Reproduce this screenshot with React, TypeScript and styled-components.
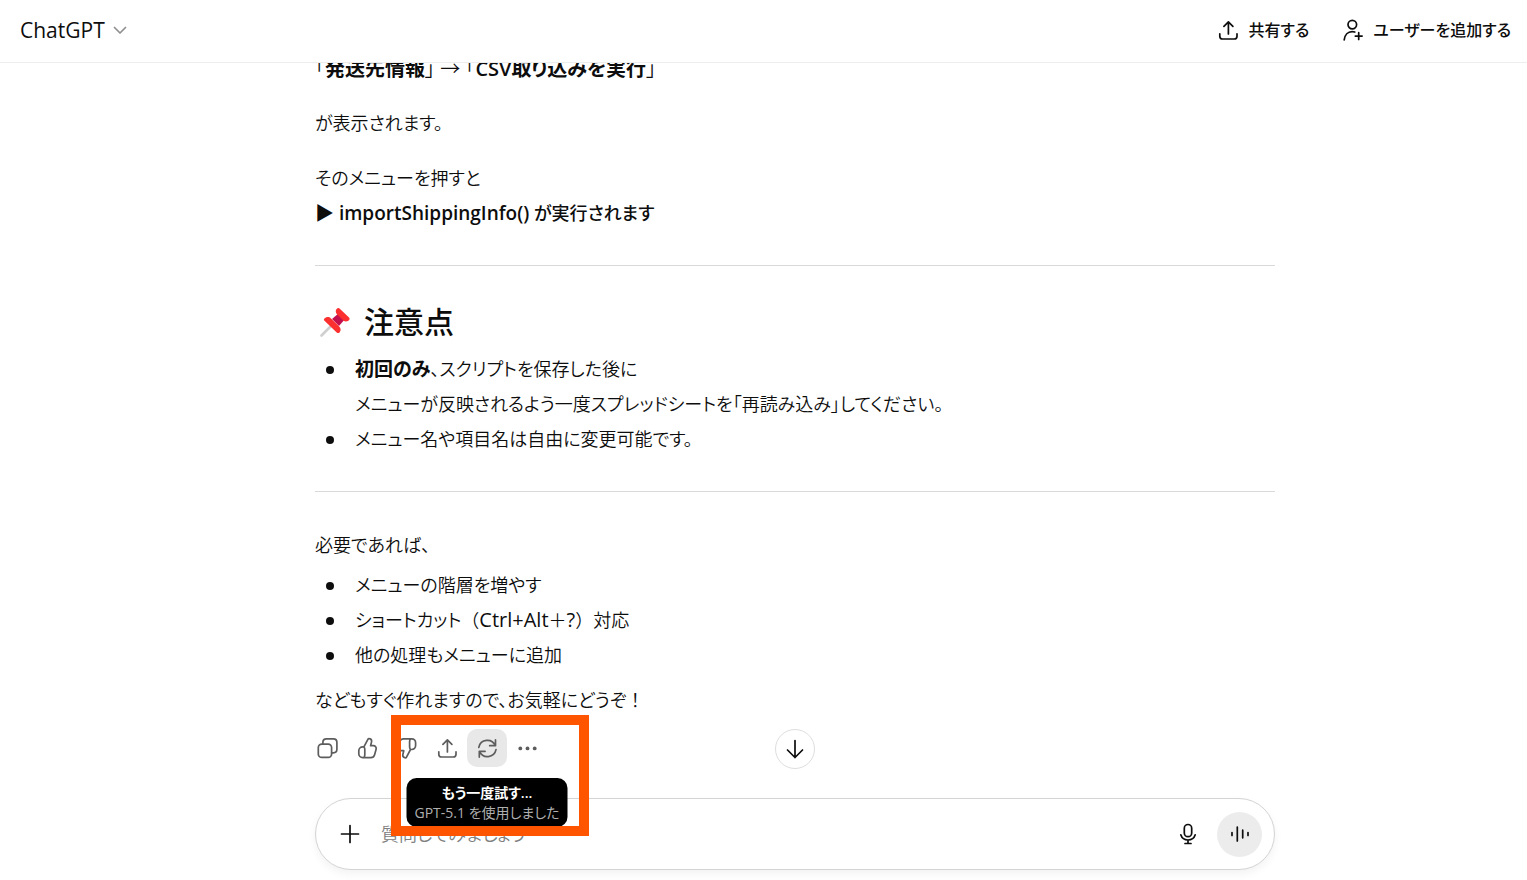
import React from "react";
import styled, { createGlobalStyle, css } from "styled-components";

const GlobalStyle = createGlobalStyle`
  * { box-sizing: border-box; }
  body {
    margin: 0;
    background: #fff;
    color: #0d0d0d;
    font-family: "Open Sans", "Noto Sans CJK JP", sans-serif;
    font-feature-settings: "palt";
  }
  button, input { font: inherit; font-feature-settings: inherit; color: inherit; }
  button { border: 0; padding: 0; background: none; cursor: pointer; }
`;

const Page = styled.div`
  display: flex;
  flex-direction: column;
  height: 100vh;
  overflow: hidden;
`;

const Header = styled.header`
  display: flex;
  flex: none;
  align-items: center;
  justify-content: space-between;
  height: 63px;
  padding: 0 16px 3px 20px;
  border-bottom: 1px solid #ededed;
`;

const ModelButton = styled.button`
  display: flex;
  align-items: center;
  gap: 7px;
  font-size: 21px;
  line-height: 32px;
`;

const HeaderActions = styled.div`
  display: flex;
  align-items: center;
  gap: 32px;
`;

const HeaderButton = styled.button`
  display: flex;
  align-items: center;
  gap: 8px;
  font-size: 16px;
  font-weight: 500;
  line-height: 24px;
`;

const Column = styled.div`
  width: 100%;
  max-width: 960px;
  margin: 0 auto;
`;

const Main = styled.main`
  display: flex;
  flex: 1;
  flex-direction: column;
  min-height: 0;
  padding-left: 63px;
`;

const Thread = styled.div`
  display: flex;
  flex: 1;
  flex-direction: column;
  justify-content: flex-end;
  min-height: 0;
  overflow: hidden;
`;

const Message = styled.article`
  font-size: 18px;
  font-weight: 350;
  line-height: 35px;
`;

const Paragraph = styled.p<{ $space?: number; $large?: boolean }>`
  margin: 0 0 ${(p) => p.$space ?? 0}px;
  ${(p) => p.$large && css`font-size: 20px;`}
`;

const Strong = styled.strong<{ $medium?: boolean; $lead?: boolean }>`
  font-weight: ${(p) => (p.$medium ? 500 : 600)};
  ${(p) => p.$lead && css`font-size: 19px; line-height: 1;`}
`;

const Latin = styled.span<{ $strong?: boolean }>`
  font-size: ${(p) => (p.$strong ? 19 : 20)}px;
  font-weight: ${(p) => (p.$strong ? 600 : 400)};
  line-height: 1;
`;

const FullWidth = styled.span`
  font-feature-settings: normal;
`;

const Rule = styled.hr`
  height: 1px;
  margin: 34px 0 36px;
  border: 0;
  background: #d9d9d9;
`;

const Heading = styled.h2`
  display: flex;
  align-items: center;
  gap: 13px;
  margin: 0 0 10px;
  padding-left: 4px;
  font-size: 30px;
  font-weight: 500;
  line-height: 40px;
`;

const List = styled.ul<{ $space?: number }>`
  margin: 0 0 ${(p) => p.$space ?? 0}px;
  padding: 0;
  list-style: none;
`;

const Item = styled.li`
  display: flex;
  padding-left: 11px;
  gap: 21px;

  &::before {
    content: "";
    flex: none;
    width: 8px;
    height: 8px;
    margin-top: 14px;
    border-radius: 50%;
    background: #0d0d0d;
  }
`;

const Toolbar = styled.div`
  position: relative;
  display: flex;
  margin: 0 -8px;
`;

const ToolButton = styled.button<{ $active?: boolean }>`
  position: relative;
  display: grid;
  place-items: center;
  width: 40px;
  height: 38px;
  border-radius: 10px;
  color: #5d5d5d;
  ${(p) => p.$active && css`background: #e8e8e8;`}
`;

const Tooltip = styled.span`
  position: absolute;
  top: 49px;
  left: 50%;
  z-index: 2;
  display: flex;
  flex-direction: column;
  align-items: center;
  padding: 5px 8px 4px;
  border-radius: 10px;
  background: #000;
  color: #fff;
  font-size: 14px;
  font-weight: 600;
  line-height: 20px;
  white-space: nowrap;
  transform: translateX(-50%);
`;

const TooltipNote = styled.span`
  color: #afafaf;
  font-weight: 400;
`;

const Highlight = styled.div`
  position: absolute;
  top: -14px;
  left: 84px;
  z-index: 3;
  width: 198px;
  height: 121px;
  border: 10px solid #ff5500;
  pointer-events: none;
`;

const ToolbarRow = styled(Column)`
  position: relative;
  z-index: 1;
  flex: none;
  padding: 11px 0 31px;
`;

const Composer = styled.form`
  position: relative;
  display: flex;
  flex: none;
  align-items: center;
  height: 72px;
  padding: 0 12px 0 18px;
  border: 1px solid #d4d4d4;
  border-radius: 36px;
  background: #fff;
  box-shadow: 0 4px 8px rgba(0, 0, 0, 0.05);
`;

const ComposerArea = styled(Column)`
  flex: none;
  padding-bottom: 10px;
`;

const Prompt = styled.input`
  flex: 1;
  min-width: 0;
  margin-left: 15px;
  padding: 0;
  border: 0;
  outline: 0;
  background: none;
  font-size: 18px;
  font-weight: 350;
  line-height: 32px;

  &::placeholder { color: #808080; opacity: 1; }
`;

const IconButton = styled.button`
  display: grid;
  place-items: center;
  width: 32px;
  height: 40px;
`;

const VoiceButton = styled.button`
  display: grid;
  place-items: center;
  width: 45px;
  height: 45px;
  margin-left: 13px;
  border-radius: 50%;
  background: #ececec;
`;

const ScrollButton = styled.button`
  position: absolute;
  top: -70px;
  left: 50%;
  display: grid;
  place-items: center;
  width: 40px;
  height: 40px;
  border: 1px solid #dedede;
  border-radius: 50%;
  background: #fff;
  transform: translateX(-50%);
`;

const Svg = styled.svg`
  display: block;
  flex: none;
  fill: none;
  stroke: currentColor;
  stroke-width: 1.7;
  stroke-linecap: round;
  stroke-linejoin: round;
`;

const Icon = ({ children, size = 24 }: { children: React.ReactNode; size?: number }) => (
  <Svg width={size} height={size} viewBox={`0 0 ${size} ${size}`} aria-hidden="true">
    {children}
  </Svg>
);

const ShareIcon = () => (
  <Icon>
    <path d="M12.4 16V4M7.9 8.3 12.4 3.8l4.5 4.5M3.8 15.8v2.4c0 1.6 1.2 2.8 2.8 2.8h11.6c1.6 0 2.8-1.2 2.8-2.8v-2.4" />
  </Icon>
);

const AddUserIcon = () => (
  <Icon>
    <circle cx="11.3" cy="6.6" r="4.3" />
    <path d="M3.2 21.8c.6-4.9 3.7-8.2 7.9-8.2 1 0 1.9.1 2.7.4M17.7 14.7v6.8M14.3 18.1h6.8" />
  </Icon>
);

const CopyIcon = () => (
  <Icon>
    <rect x="3.3" y="8.1" width="13.3" height="13.3" rx="3.4" />
    <path d="M7.9 8V6.3c0-2 1.5-3.5 3.5-3.5h7c2 0 3.5 1.5 3.5 3.5v7c0 2-1.5 3.5-3.5 3.5h-1.7" />
  </Icon>
);

const thumb =
  "M8.9 10.9 12.9 3.3c.3-.6.9-.9 1.5-.7 1.6.4 2.5 1.9 2.1 3.5l-.9 3.6h2.700c2 0 3.300 1.700 2.800 3.500l-1.500 5.500c-.5 1.800-1.900 2.900-3.700 2.900H7.700c-2.200 0-3.900-1.700-3.900-3.900v-2.900c0-2.200 1.700-3.900 3.900-3.900h1.200M8.900 10.900c.6.7.9 1.500.9 2.400v5.500c0 1-.3 1.900-.9 2.700";

const ThumbUpIcon = () => (
  <Icon><path d={thumb} /></Icon>
);

const ThumbDownIcon = () => (
  <Icon><path d={thumb} transform="rotate(180 12.2 12.2)" /></Icon>
);

const RetryIcon = () => (
  <Icon>
    <path d="M3.8 11.3a8.7 8.7 0 0 1 16.5-1.7M20.5 3.9v5.8h-5.8M21 13.7a8.7 8.7 0 0 1-16.5 1.7M4.3 21.1v-5.8h5.8" />
  </Icon>
);

const MoreIcon = () => (
  <Icon>
    <g fill="currentColor" stroke="none">
      <circle cx="5.3" cy="12.4" r="1.9" />
      <circle cx="12.5" cy="12.4" r="1.9" />
      <circle cx="19.7" cy="12.4" r="1.9" />
    </g>
  </Icon>
);

const PinIcon = () => (
  <Svg width="32" height="32" viewBox="0 0 32 32" aria-hidden="true">
    <path d="M2.5 29.5 12 20" stroke="#cfcfcf" strokeWidth="2.6" />
    <path d="m13 13 7-6 6 6-6 7Z" fill="#c3104c" stroke="none" />
    <path d="M17.4 3.3c1.2-1.5 2.3-1.6 3.4-.6l9.2 8.8c1 1 .7 2.4-.6 3.2-1.8 1-3.4.9-4.7.1l-7-6.9c-1.1-1.6-1.3-3.2-.3-4.6Z" fill="#fb302f" stroke="none" />
    <path d="M5.8 12.2c2-1.7 4.5-1.3 6.2.3l8 7.8c1.9 1.9 2.2 4.1.7 5.9-.9 1.1-2 1.2-3 .2L5.5 14.8c-.9-.9-.8-1.8.3-2.6Z" fill="#fb302f" stroke="none" />
  </Svg>
);

export default function App() {
  return (
    <>
      <GlobalStyle />
      <Page>
        <Header>
          <ModelButton type="button">
            ChatGPT
            <Svg width="16" height="16" viewBox="0 0 16 16" color="#8f8f8f" aria-hidden="true">
              <path d="m2.5 5.5 5.5 5.5 5.5-5.5" />
            </Svg>
          </ModelButton>
          <HeaderActions>
            <HeaderButton type="button"><ShareIcon />共有する</HeaderButton>
            <HeaderButton type="button"><AddUserIcon />ユーザーを追加する</HeaderButton>
          </HeaderActions>
        </Header>
        <Main>
          <Thread>
            <Column>
              <Message>
                <Paragraph $space={20} $large>
                  「<Strong>発送先情報</Strong>」 → 「<Strong>CSV取り込みを実行</Strong>」
                </Paragraph>
                <Paragraph $space={20}>が表示されます。</Paragraph>
                <Paragraph>
                  そのメニューを押すと<br />
                  <Strong $medium>
                    <Latin $strong>▶ importShippingInfo()</Latin> が実行されます
                  </Strong>
                </Paragraph>
                <Rule />
                <Heading><PinIcon />注意点</Heading>
                <List>
                  <Item>
                    <span>
                      <Strong $lead>初回のみ</Strong>、スクリプトを保存した後に<br />
                      メニューが反映されるよう一度スプレッドシートを「再読み込み」してください。
                    </span>
                  </Item>
                  <Item>メニュー名や項目名は自由に変更可能です。</Item>
                </List>
                <Rule />
                <Paragraph $space={5}>必要であれば、</Paragraph>
                <List $space={10}>
                  <Item>メニューの階層を増やす</Item>
                  <Item>
                    <span>
                      ショートカット<FullWidth>（<Latin>Ctrl+Alt</Latin>＋<Latin>?</Latin>）</FullWidth>対応
                    </span>
                  </Item>
                  <Item>他の処理もメニューに追加</Item>
                </List>
                <Paragraph>などもすぐ作れますので、お気軽にどうぞ<FullWidth>！</FullWidth></Paragraph>
              </Message>
            </Column>
          </Thread>
          <ToolbarRow>
            <Toolbar>
              <ToolButton type="button" aria-label="コピーする"><CopyIcon /></ToolButton>
              <ToolButton type="button" aria-label="よい回答です"><ThumbUpIcon /></ToolButton>
              <ToolButton type="button" aria-label="よくない回答です"><ThumbDownIcon /></ToolButton>
              <ToolButton type="button" aria-label="共有する"><ShareIcon /></ToolButton>
              <ToolButton type="button" $active>
                <RetryIcon />
                <Tooltip role="tooltip">
                  もう一度試す...
                  <TooltipNote>GPT-5.1 を使用しました</TooltipNote>
                </Tooltip>
              </ToolButton>
              <ToolButton type="button" aria-label="その他"><MoreIcon /></ToolButton>
              <Highlight />
            </Toolbar>
          </ToolbarRow>
          <ComposerArea>
            <Composer>
              <ScrollButton type="button" aria-label="一番下へ">
                <Svg width="24" height="24" viewBox="0 0 24 24" strokeWidth="2" aria-hidden="true">
                  <path d="M12 3.5v17M4.5 13l7.5 7.5 7.5-7.5" />
                </Svg>
              </ScrollButton>
              <IconButton type="button" aria-label="追加">
                <Icon><path d="M12 3.5v17M3.5 12h17" /></Icon>
              </IconButton>
              <Prompt type="text" aria-label="メッセージ" placeholder="質問してみましょう" />
              <IconButton type="button" aria-label="音声入力">
                <Icon>
                  <rect x="8.3" y="2.5" width="7.4" height="12.2" rx="3.7" />
                  <path d="M4.8 12.8c1 3.2 3.7 5.2 7.2 5.2s6.2-2 7.2-5.2M12 18v3.5M9 21.5h6" />
                </Icon>
              </IconButton>
              <VoiceButton type="button" aria-label="音声モード">
                <Icon><path d="M4 10.5v3M9.3 5v14M14.700 8.200v7.600M20 10.500v3" /></Icon>
              </VoiceButton>
            </Composer>
          </ComposerArea>
        </Main>
      </Page>
    </>
  );
}
